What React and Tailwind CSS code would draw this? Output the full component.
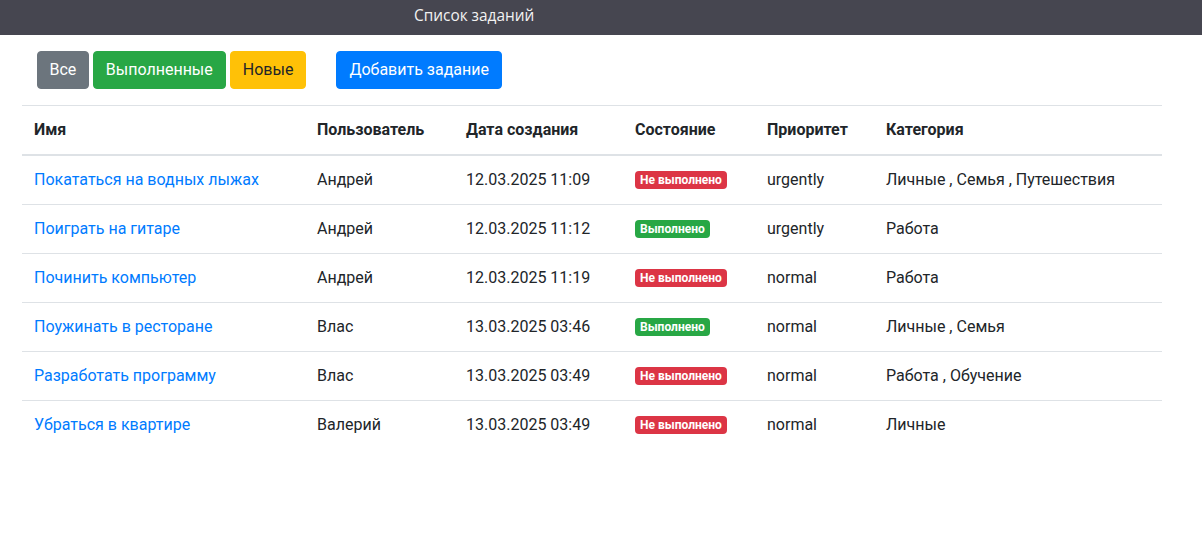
import React from "react";

const rows = [
  ["Покататься на водных лыжах", "Андрей", "12.03.2025 11:09", false, "urgently", "Личные , Семья , Путешествия"],
  ["Поиграть на гитаре", "Андрей", "12.03.2025 11:12", true, "urgently", "Работа"],
  ["Починить компьютер", "Андрей", "12.03.2025 11:19", false, "normal", "Работа"],
  ["Поужинать в ресторане", "Влас", "13.03.2025 03:46", true, "normal", "Личные , Семья"],
  ["Разработать программу", "Влас", "13.03.2025 03:49", false, "normal", "Работа , Обучение"],
  ["Убраться в квартире", "Валерий", "13.03.2025 03:49", false, "normal", "Личные"],
];

export default function App() {
  return (
    <div className="min-h-[544px] bg-white text-[#212529] text-[16px] leading-6" style={{ fontFamily: "Roboto, 'Liberation Sans', sans-serif" }}>
      <div className="h-[35px] bg-[#464650] flex items-start pt-[4px] pl-[414px]">
        <span className="text-[#f2f2f2] text-[15.4px] leading-6" style={{ fontFamily: "'Open Sans', 'Noto Sans', sans-serif" }}>Список заданий</span>
      </div>
      <div className="ml-[22px] w-[1140px]">
        <div className="flex items-center pt-[16px] pb-[16px] pl-[15px]">
          <button className="h-[38px] px-[11.5px] border border-[#6c757d] rounded-[4px] bg-[#6c757d] text-white">Все</button>
          <button className="h-[38px] px-[12px] border border-[#28a745] rounded-[4px] bg-[#28a745] text-white ml-[4px]">Выполненные</button>
          <button className="h-[38px] px-[12px] border border-[#ffc107] rounded-[4px] bg-[#ffc107] text-[#212529] ml-[4px]">Новые</button>
          <button className="h-[38px] px-[12px] border border-[#007bff] rounded-[4px] bg-[#007bff] text-white ml-[30px]">Добавить задание</button>
        </div>
        <table className="w-full border-collapse">
          <colgroup>
            <col className="w-[283px]" />
            <col className="w-[149px]" />
            <col className="w-[169px]" />
            <col className="w-[132px]" />
            <col className="w-[119px]" />
            <col className="w-[288px]" />
          </colgroup>
          <thead>
            <tr className="border-t border-[#dee2e6]">
              {["Имя", "Пользователь", "Дата создания", "Состояние", "Приоритет", "Категория"].map((h) => (
                <th key={h} className="text-left font-bold p-[12px] border-b-2 border-[#dee2e6]">{h}</th>
              ))}
            </tr>
          </thead>
          <tbody>
            {rows.map((r, i) => (
              <tr key={i} className={i < rows.length - 1 ? "border-b border-[#dee2e6]" : ""}>
                <td className="p-[12px]"><a className="text-[#007bff]">{r[0]}</a></td>
                <td className="p-[12px]">{r[1]}</td>
                <td className="p-[12px]">{r[2]}</td>
                <td className="p-[12px]">
                  <span className={"inline-block align-middle relative top-[-1px] text-[12px] leading-[12px] font-bold text-white px-[5px] py-[3px] rounded-[4px] " + (r[3] ? "bg-[#28a745]" : "bg-[#dc3545]")}>
                    {r[3] ? "Выполнено" : "Не выполнено"}
                  </span>
                </td>
                <td className="p-[12px]">{r[4]}</td>
                <td className="p-[12px]">{r[5]}</td>
              </tr>
            ))}
          </tbody>
        </table>
      </div>
    </div>
  );
}
